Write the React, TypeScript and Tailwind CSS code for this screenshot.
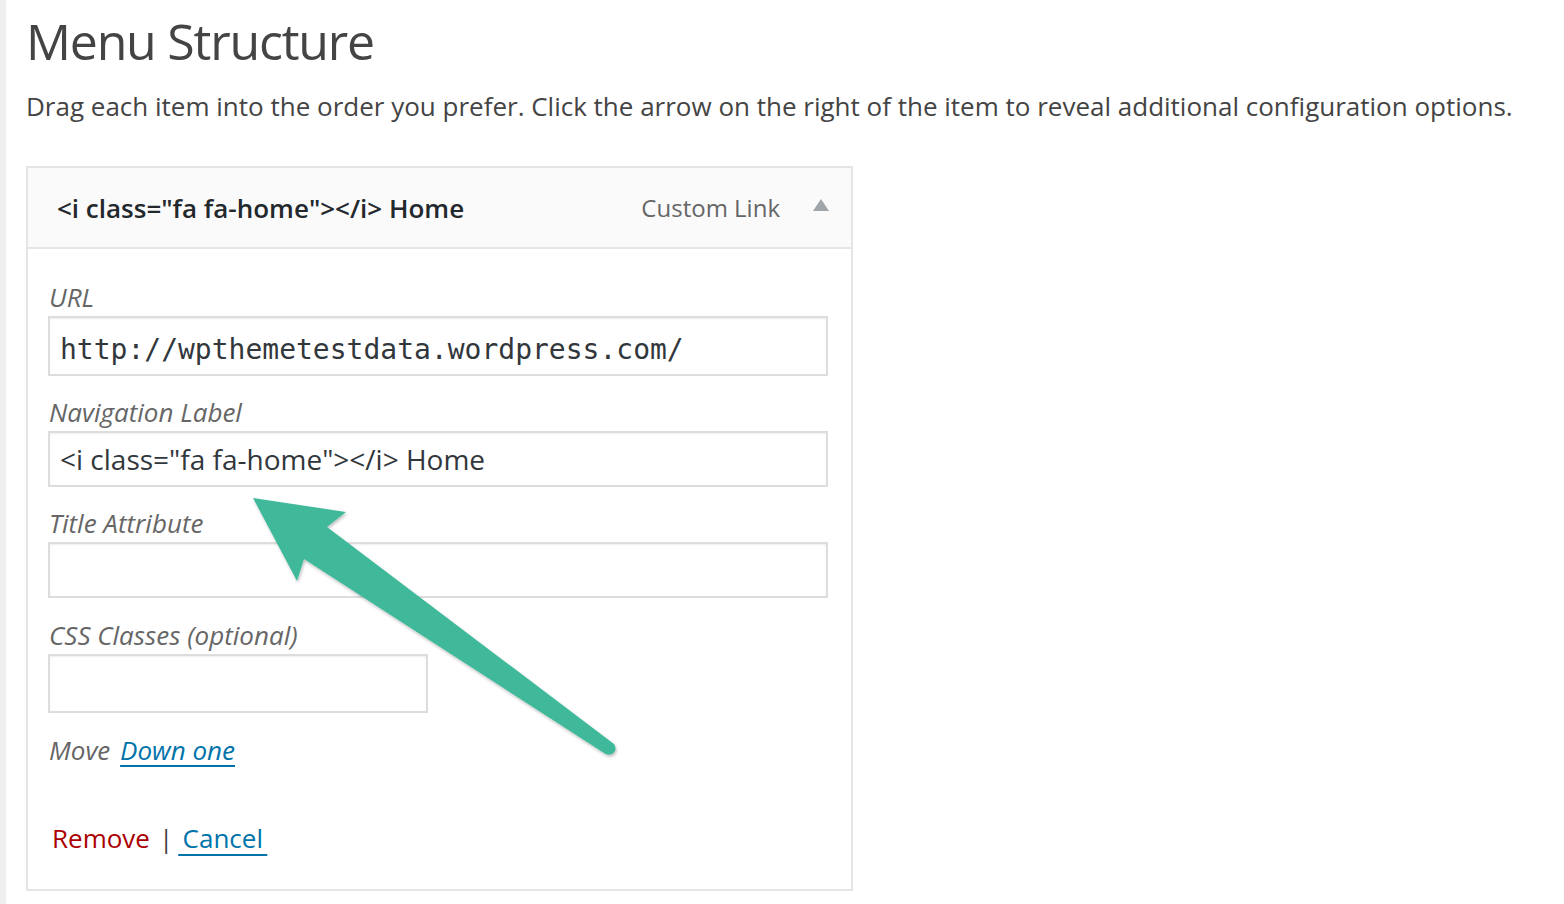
import React from "react";

const sans = { fontFamily: '"Open Sans", "Noto Sans", sans-serif' };

function Label({ children }: { children: React.ReactNode }) {
  return (
    <div className="text-[26px] leading-[36px] italic text-[#666] mb-[1px] pl-[1px]">{children}</div>
  );
}

function Arrow() {
  return (
    <svg
      className="absolute left-0 top-0 pointer-events-none"
      width="1564"
      height="904"
      viewBox="0 0 1564 904"
    >
      <defs>
        <filter id="sh" x="-10%" y="-10%" width="120%" height="120%">
          <feDropShadow dx="1" dy="2" stdDeviation="1.5" floodColor="#000" floodOpacity="0.25" />
        </filter>
      </defs>
      <path
        d="M253 498 L346 512 L327 527 L614 744 Q618 750 612 754 Q608 756 604 753 L304 559 L297 581 Z"
        fill="#41b99b"
        filter="url(#sh)"
      />
    </svg>
  );
}

export default function App() {
  return (
    <div className="relative w-[1564px] h-[904px] bg-white flex overflow-hidden" style={sans}>
      <div className="w-[6px] bg-[#eeeeee] shrink-0" />
      <div className="pl-[20px] flex-1 text-[#444]">
        <h1 className="text-[50px] leading-[64px] pt-[9px] tracking-[-1.2px] text-[#444] font-normal whitespace-nowrap">
          Menu Structure
        </h1>
        <p className="text-[26px] leading-[40px] mt-[13px] tracking-[0px] text-[#444] whitespace-nowrap">
          Drag each item into the order you prefer. Click the arrow on the right of the item to reveal additional configuration options.
        </p>
        <div className="mt-[40px] w-[827px] border-2 border-[#e5e5e5] bg-white">
          <div className="h-[81px] bg-[#fafafa] border-b-2 border-[#e5e5e5] flex items-center pl-[29px] pr-[22px]">
            <span className="text-[26px] leading-[36px] font-semibold text-[#23282d] tracking-[0px]">
              {'<i class="fa fa-home"></i> Home'}
            </span>
            <span className="ml-auto text-[24px] leading-[36px] text-[#666]">Custom Link</span>
            <svg className="ml-[33px] -mt-[6px]" width="16" height="12" viewBox="0 0 16 12">
              <path d="M8 0 L16 12 L0 12 Z" fill="#a0a5aa" />
            </svg>
          </div>
          <div className="pl-[20px] pr-[23px] pt-[30px] pb-[31px]">
            <Label>URL</Label>
            <div className="h-[60px] border-2 border-[#dddddd] shadow-[inset_0_1px_2px_rgba(0,0,0,0.07)] flex items-center px-[10px] pt-[8px]">
              <span className="text-[28px] text-[#32373c]" style={{ fontFamily: '"DejaVu Sans Mono", monospace' }}>
                http://wpthemetestdata.wordpress.com/
              </span>
            </div>
            <div className="mt-[18px]">
              <Label>Navigation Label</Label>
            </div>
            <div className="h-[56px] border-2 border-[#dddddd] shadow-[inset_0_1px_2px_rgba(0,0,0,0.07)] flex items-center px-[10px]">
              <span className="text-[28px] text-[#32373c]">{'<i class="fa fa-home"></i> Home'}</span>
            </div>
            <div className="mt-[18px]">
              <Label>Title Attribute</Label>
            </div>
            <div className="h-[56px] border-2 border-[#dddddd] shadow-[inset_0_1px_2px_rgba(0,0,0,0.07)]" />
            <div className="mt-[19px]">
              <Label>CSS Classes (optional)</Label>
            </div>
            <div className="h-[59px] w-[380px] border-2 border-[#dddddd] shadow-[inset_0_1px_2px_rgba(0,0,0,0.07)]" />
            <div className="mt-[19px] text-[26px] leading-[36px] italic text-[#666] pl-[1px]">
              Move{" "}
              <a className="text-[#0073aa] underline decoration-2 underline-offset-[5px] ml-[3px]">Down one</a>
            </div>
            <div className="mt-[50px] text-[26px] leading-[40px] pl-[4px]">
              <a className="text-[#a00]">Remove</a>
              <span className="text-[#444] ml-[9px] mr-[5px]">|</span>
              <a className="text-[#0073aa] underline decoration-2 underline-offset-[6px]">{"\u2009Cancel\u2009"}</a>
            </div>
          </div>
        </div>
      </div>
      <Arrow />
    </div>
  );
}
